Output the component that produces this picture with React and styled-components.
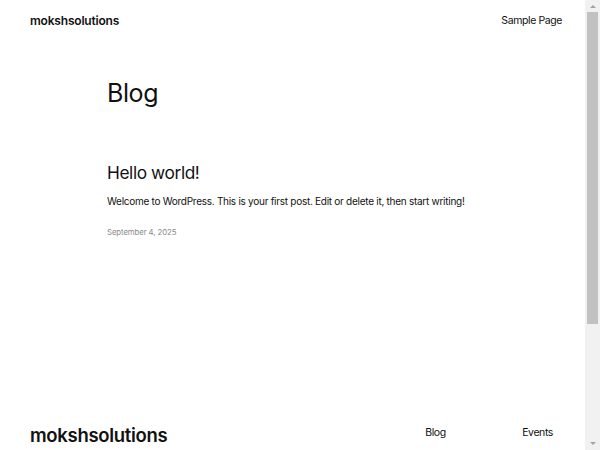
import React from "react";
import styled, { createGlobalStyle } from "styled-components";

const Global = createGlobalStyle`
  html, body { margin: 0; padding: 0; background: #ffffff; }
  body {
    font-family: Inter, "Noto Sans", "Liberation Sans", sans-serif;
    color: #111111;
    -webkit-font-smoothing: antialiased;
  }
  a { color: inherit; text-decoration: none; }
`;

const Page = styled.div`
  display: flex;
  flex-direction: column;
  margin-right: 15px;
  min-height: 620px;
`;

const Header = styled.header`
  display: flex;
  align-items: center;
  justify-content: space-between;
  padding: 6px 23px 0 30px;
  height: 28px;
`;

const SiteTitle = styled.a`
  font-size: ${(p) => p.$size}px;
  font-weight: 600;
  letter-spacing: ${(p) => p.$spacing}px;
  color: #111;
`;

const NavLink = styled.a`
  font-size: 10.5px;
  font-weight: 400;
  letter-spacing: -0.4px;
  color: #111;
`;

const Main = styled.main`
  flex: 1;
  padding: 44px 107px 0 107px;
  display: flex;
  flex-direction: column;
`;

const PageTitle = styled.h1`
  margin: 0;
  font-size: 25px;
  font-weight: 400;
  letter-spacing: -0.4px;
  line-height: 30px;
`;

const Post = styled.article`
  margin-top: 53px;
  display: flex;
  flex-direction: column;
`;

const PostTitle = styled.h2`
  margin: 0;
  font-size: 17.3px;
  font-weight: 400;
  letter-spacing: -0.4px;
  line-height: 24px;
`;

const Excerpt = styled.p`
  margin: 8px 0 0;
  font-size: 10px;
  letter-spacing: -0.27px;
  line-height: 16px;
  color: #111;
`;

const PostDate = styled.time`
  margin-top: 17px;
  font-size: 7.8px;
  color: #8a8a8a;
  letter-spacing: -0.1px;
  line-height: 12px;
`;

const Footer = styled.footer`
  display: flex;
  justify-content: space-between;
  align-items: flex-start;
  padding: 0 32px 0 30px;
  margin-top: 180px;
  height: 196px;
`;

const FooterNav = styled.nav`
  display: grid;
  grid-template-columns: 97px auto;
  padding-top: 2px;
`;

/* browser scrollbar shown at the right edge of the reference */
const ScrollTrack = styled.div`
  position: fixed;
  top: 0;
  right: 0;
  width: 15px;
  height: 100vh;
  background: #f1f1f1;
  display: flex;
  flex-direction: column;
  align-items: center;
`;

const ScrollArrow = styled.div`
  width: 0;
  height: 0;
  margin: ${(p) => (p.$down ? "auto 0 5px" : "5px 0 0")};
  border-left: 3px solid transparent;
  border-right: 3px solid transparent;
  ${(p) => (p.$down ? "border-top: 3px solid #a3a3a3;" : "border-bottom: 3px solid #a3a3a3;")}
`;

const ScrollThumb = styled.div`
  width: 11px;
  height: 312px;
  margin-top: 4px;
  background: #c1c1c1;
`;

export default function App() {
  return (
    <>
      <Global />
      <Page>
        <Header>
          <SiteTitle href="#" $size={12} $spacing={-0.2}>mokshsolutions</SiteTitle>
          <NavLink href="#">Sample Page</NavLink>
        </Header>
        <Main>
          <PageTitle>Blog</PageTitle>
          <Post>
            <PostTitle>Hello world!</PostTitle>
            <Excerpt>
              Welcome to WordPress. This is your first post. Edit or delete it, then start writing!
            </Excerpt>
            <PostDate>September 4, 2025</PostDate>
          </Post>
        </Main>
        <Footer>
          <SiteTitle href="#" $size={18.5} $spacing={-0.3}>mokshsolutions</SiteTitle>
          <FooterNav>
            <NavLink href="#">Blog</NavLink>
            <NavLink href="#">Events</NavLink>
          </FooterNav>
        </Footer>
      </Page>
      <ScrollTrack aria-hidden="true">
        <ScrollArrow />
        <ScrollThumb />
        <ScrollArrow $down />
      </ScrollTrack>
    </>
  );
}
